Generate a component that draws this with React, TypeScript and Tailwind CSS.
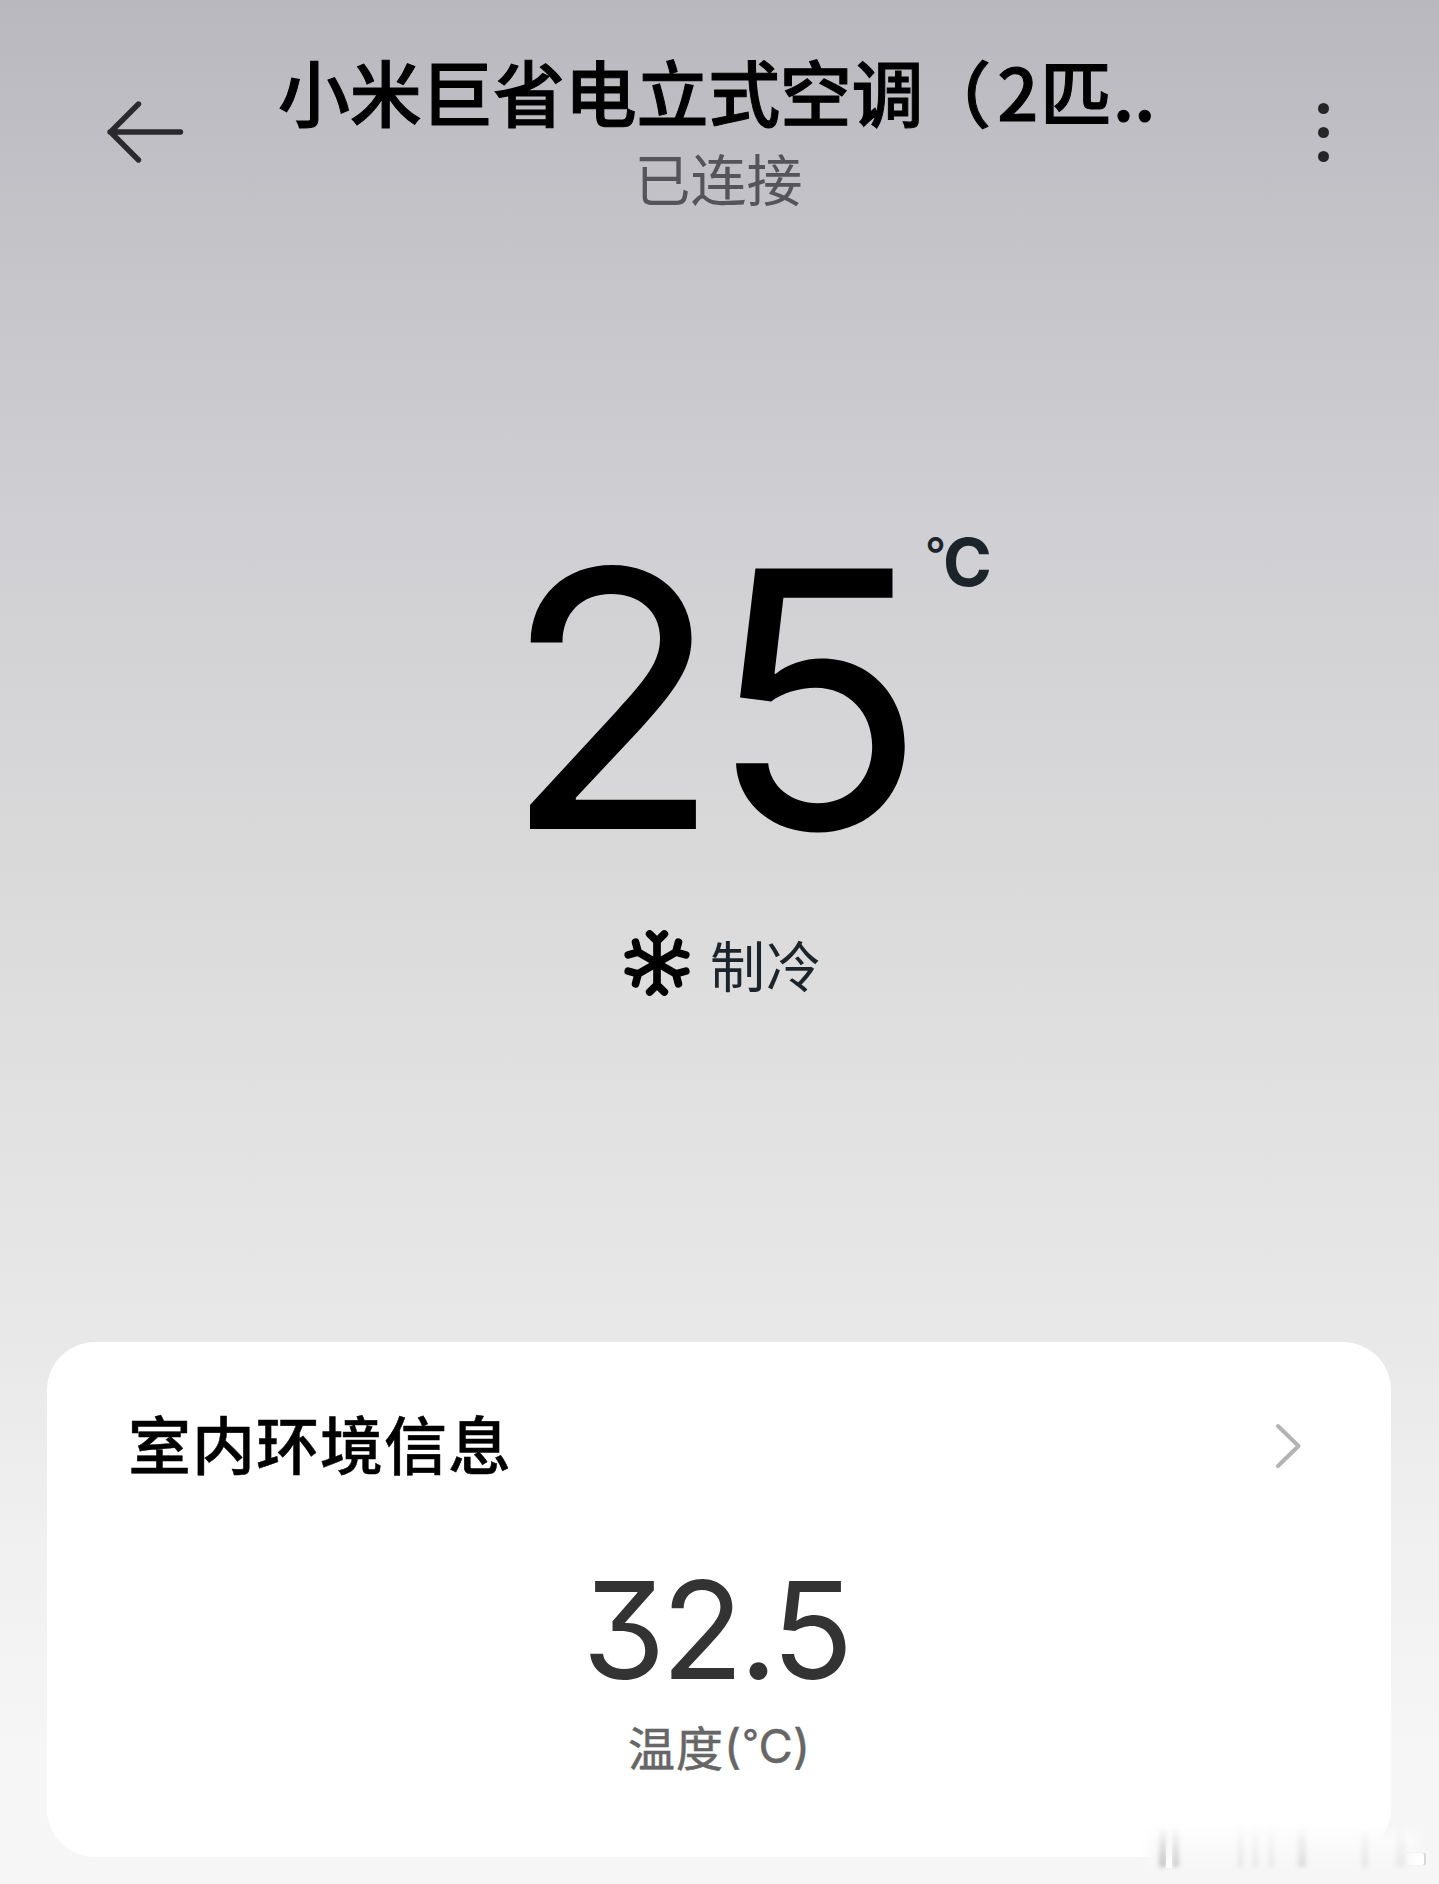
const CJK = "font-['Noto_Sans_CJK_SC',sans-serif]";
const NUM = "font-['Inter','Noto_Sans_CJK_SC',sans-serif]";

function BackArrow() {
  return (
    <svg className="h-[66px] w-[82px]" viewBox="0 0 82 66" fill="none" stroke="#2a2a2c" strokeWidth="5.4" strokeLinecap="round" strokeLinejoin="round">
      <path d="M76.500 33H6M34.500 5L6.500 33L34.500 61" />
    </svg>
  );
}

function Snowflake() {
  return (
    <svg className="h-[68px] w-[68px]" viewBox="-102 -102 204 204" fill="none" stroke="#000" strokeWidth="23" strokeLinecap="round" strokeLinejoin="round">
      {[0, 60, 120, 180, 240, 300].map((deg) => (
        <path key={deg} d="M0 0V-67M-22 -87L0 -65L22 -87" transform={`rotate(${deg})`} />
      ))}
    </svg>
  );
}

function Header() {
  return (
    <header className="flex h-[230px] items-start justify-between pl-[104px] pr-[110px]">
      <button className="mt-[99px]">
        <BackArrow />
      </button>
      <div className={`flex flex-col items-center ${CJK}`}>
        <h1 className="mt-[38px] whitespace-nowrap text-[72px] font-medium leading-[104px] tracking-[-0.3px] text-black [-webkit-text-stroke:1px_black]">
          小米巨省电立式空调<span className="-ml-[4px] tracking-[6px]">（</span>2<span className="ml-[2px]">匹</span><span className="ml-[1px]">..</span>
        </h1>
        <p className="mt-[-5px] pl-[4px] text-[56px] leading-[80px] text-[#55545a]">已连接</p>
      </div>
      <button className="mt-[103px] flex w-[82px] flex-col items-end gap-[13px]">
        {[0, 1, 2].map((i) => (
          <span key={i} className="h-[11px] w-[11px] rounded-full bg-[#262628]" />
        ))}
      </button>
    </header>
  );
}

function Watermark() {
  return (
    <div className="absolute bottom-[15px] right-[14px] h-[46px] w-[284px]">
      <div className="h-full w-full bg-gradient-to-b from-white/0 via-[#fbfbfb] via-40% to-[#f6f6f6] [mask-image:linear-gradient(to_right,transparent,black_14px,black_270px,transparent)]" />
      {[
        ["left-[18px] w-[8px]", "to-[#b8b8b8]/80"],
        ["left-[31px] w-[7px]", "to-[#c4c4c4]/80"],
        ["left-[97px] w-[5px]", "to-[#dedede]/70"],
        ["left-[112px] w-[5px]", "to-[#e2e2e2]/70"],
        ["left-[128px] w-[5px]", "to-[#e2e2e2]/70"],
        ["left-[157px] w-[8px]", "to-[#d6d6d6]/80"],
        ["left-[221px] w-[6px]", "to-[#dedede]/70"],
        ["left-[255px] w-[9px]", "to-[#e2e2e2]/70"],
      ].map(([pos, tone]) => (
        <span key={pos} className={`absolute top-[4px] h-[40px] bg-gradient-to-b from-transparent blur-[2px] ${pos} ${tone}`} />
      ))}
      <span className="absolute bottom-px left-[25px] h-[42px] w-[6px] bg-gradient-to-b from-transparent to-white" />
      <span className="absolute bottom-[3px] right-[-1px] h-[14px] w-[20px] rounded-r-[4px] border-y border-r-2 border-y-[#f1f1f1] border-r-[#d8d8d8] bg-gradient-to-r from-transparent to-white to-60%" />
    </div>
  );
}

export default function App() {
  return (
    <div className="relative flex h-[1884px] w-[1439px] flex-col overflow-hidden bg-[linear-gradient(to_bottom,#b9b8be_0px,#c4c3c8_230px,#cfced2_510px,#d9d9da_850px,#e8e8e8_1330px,#f0f0f0_1540px,#f6f6f6_1760px)]">
      <Header />

      <section className="flex h-[1112px] flex-col items-center">
        <div className={`mt-[248px] flex items-start pl-[56px] ${NUM}`}>
          <span className="text-[358px] leading-[442px] tracking-[-13px] text-black">25</span>
          <span className="ml-[12px] mt-[44px] flex items-start leading-[80px] text-[#1b232b]">
            <span className="mt-[-8px] text-[46px] font-medium">°</span>
            <span className="ml-[-3px] text-[66px] font-bold">C</span>
          </span>
        </div>
        <div className="mt-[3px] flex items-center gap-[19px] pl-[6px]">
          <Snowflake />
          <span className={`text-[55px] leading-[80px] tracking-[1px] text-[#1b232b] ${CJK}`}>制冷</span>
        </div>
      </section>

      <section className="ml-[47px] mr-[48px] flex h-[515px] flex-col rounded-[48px] bg-white">
        <div className="mt-[54px] flex items-center justify-between pl-[81px] pr-[87px]">
          <h2 className={`text-[63px] font-medium leading-[92px] tracking-[1px] text-black [-webkit-text-stroke:0.5px_black] ${CJK}`}>室内环境信息</h2>
          <svg className="mt-[8px] h-[48px] w-[30px]" viewBox="0 0 30 48" fill="none" stroke="#b3b3b3" strokeWidth="4" strokeLinecap="round" strokeLinejoin="round">
            <path d="M4 4L24.500 24L4 44" />
          </svg>
        </div>
        <div className="mt-[60px] flex flex-col items-center">
          <span className={`mr-[7px] text-[135px] leading-[164px] tracking-[-4.5px] text-[#333] [font-feature-settings:'cv09'] ${NUM}`}>32.5</span>
          <div className="flex items-start text-[47px] leading-[68px] text-[#666] [-webkit-text-stroke:0.5px_#666]">
            <span className={`tracking-[1px] ${CJK}`}>温度</span>
            <span className={`flex items-start text-[47px] ${NUM}`}>
              <span>(</span>
              <span className="ml-[1px] mt-[-4px] text-[36px]">°</span>
              <span>C</span>
              <span>)</span>
            </span>
          </div>
        </div>
      </section>

      <Watermark />
    </div>
  );
}
